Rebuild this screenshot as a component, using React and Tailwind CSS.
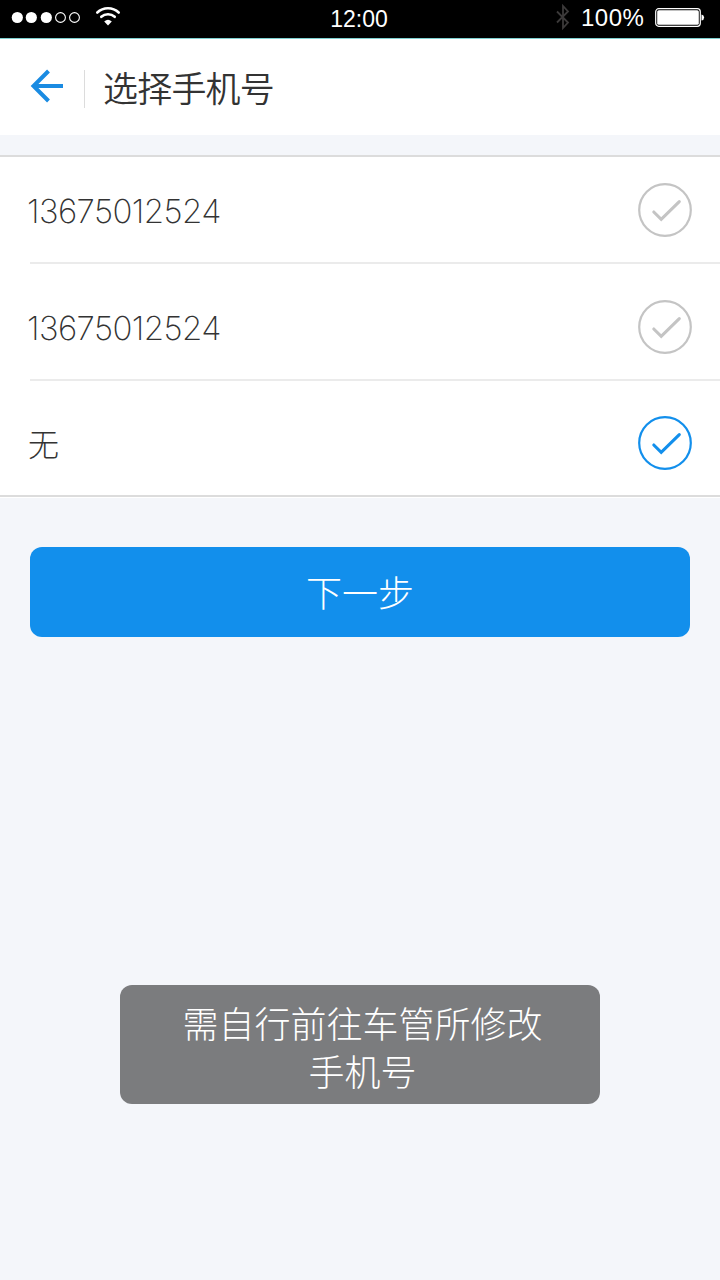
const cjk = "font-['Noto_Sans_CJK_SC',sans-serif]";

function StatusBar() {
  return (
    <div className="flex h-[39px] shrink-0 items-center border-b border-[#7fd0d0] bg-black font-['Liberation_Sans',sans-serif] text-white">
      <div className="flex flex-1 items-center pl-[11px]">
        <svg width="112" height="24" viewBox="0 0 112 24" fill="none" className="-mt-1">
          <circle cx="6.3" cy="12.5" r="5.6" fill="#fff" />
          <circle cx="20.3" cy="12.5" r="5.6" fill="#fff" />
          <circle cx="35.3" cy="12.5" r="5.6" fill="#fff" />
          <circle cx="49.5" cy="12.5" r="4.9" stroke="#fff" strokeWidth="1.1" />
          <circle cx="63.5" cy="12.5" r="4.9" stroke="#fff" strokeWidth="1.1" />
          <path d="M86.3 7.5a15.5 15.5 0 0 1 21.4 0" stroke="#fff" strokeWidth="2.6" strokeLinecap="round" />
          <path d="M90.3 11.8a10 10 0 0 1 13.4 0" stroke="#fff" strokeWidth="2.6" strokeLinecap="round" />
          <path d="M93.2 16.5Q97 13 100.8 16.5L97 20.6z" fill="#fff" />
        </svg>
      </div>
      <div className="w-[60px] pl-[2px] text-center text-[23px] leading-none">12:00</div>
      <div className="flex flex-1 items-center justify-end pr-[15px]">
        <svg width="16" height="28" viewBox="0 0 16 28" fill="none" stroke="#3c3a3a" strokeWidth="1.8" className="-mt-1">
          <path d="M2 8.5l11 11-5 5.5V3l5 5.5-11 11" />
        </svg>
        <span className="ml-[10px] -mt-0.5 w-[74px] text-[24px] leading-none tracking-[0.5px]">100%</span>
        <svg width="50" height="20" viewBox="0 0 50 20" fill="none" className="-mt-1">
          <rect x="0.7" y="1.7" width="44.6" height="17.6" rx="3" stroke="#fff" strokeWidth="1.2" />
          <rect x="2.2" y="3.2" width="41.6" height="14.6" rx="1.6" fill="#fff" />
          <path d="M46.5 7.5q2.6.4 2.6 3t-2.6 3z" fill="#fff" />
        </svg>
      </div>
    </div>
  );
}

function CheckMark({ selected }) {
  return (
    <svg width="54" height="54" viewBox="0 0 54 54" fill="none" className={selected ? "text-[#128fec]" : "text-[#c4c4c4]"}>
      <circle cx="27" cy="27" r="25.8" stroke="currentColor" strokeWidth="2.2" />
      <path d="M15.8 29L23.2 36.4L41.3 18.6" stroke="currentColor" strokeWidth="3.1" strokeLinecap="round" />
    </svg>
  );
}

function PhoneNumber({ children }) {
  return (
    <span className="-ml-[3px] mt-[2px] font-['Inter',sans-serif] text-[33px] font-[250] leading-[40px] tracking-[-0.6px] text-[#333]">
      {children}
    </span>
  );
}

export default function App() {
  return (
    <div className="flex h-[1280px] w-[720px] flex-col overflow-hidden bg-[#f4f6fa]">
      <StatusBar />
      <header className="flex h-24 shrink-0 items-center bg-white pl-[30px]">
        <svg width="34" height="34" viewBox="0 0 34 34" fill="none" stroke="#1a8be2" strokeWidth="4" className="-mt-0.5">
          <path d="M18.5 2L3.5 17L18.5 32M3 17H33" />
        </svg>
        <div className="ml-5 mt-1 h-[38px] w-px bg-[#dcdcdc]" />
        <h1 className={`${cjk} ml-[18px] text-[35px] font-[350] leading-[50px] tracking-[-0.8px] text-[#333]`}>选择手机号</h1>
      </header>
      <main className="mt-5 shrink-0 border-y-2 border-[#dcdcdc] bg-white">
        <div className="ml-[30px] flex h-[107px] items-center justify-between border-b-2 border-[#ebebeb] pr-[28px]">
          <PhoneNumber>13675012524</PhoneNumber>
          <CheckMark />
        </div>
        <div className="ml-[30px] flex h-[117px] items-center justify-between border-b-2 border-[#ebebeb] pt-[11px] pr-[28px]">
          <PhoneNumber>13675012524</PhoneNumber>
          <CheckMark />
        </div>
        <div className="ml-[30px] flex h-[114px] items-center justify-between pt-[10px] pr-[28px]">
          <span className={`${cjk} -ml-[2px] text-[31px] font-light leading-[46px] text-[#333]`}>无</span>
          <CheckMark selected />
        </div>
      </main>
      <div className="h-px shrink-0 bg-white" />
      <button className={`${cjk} mx-[30px] mt-[49px] h-[90px] shrink-0 rounded-xl bg-[#128fec] pb-[3px] text-[36px] font-light text-white`}>下一步</button>
      <div className={`${cjk} mx-[120px] mt-[348px] h-[119px] shrink-0 rounded-xl bg-[#7b7c7e] pl-[5px] pt-[13px] text-center text-[36px] font-light leading-[48px] text-white`}>
        <p>需自行前往车管所修改</p>
        <p>手机号</p>
      </div>
    </div>
  );
}
